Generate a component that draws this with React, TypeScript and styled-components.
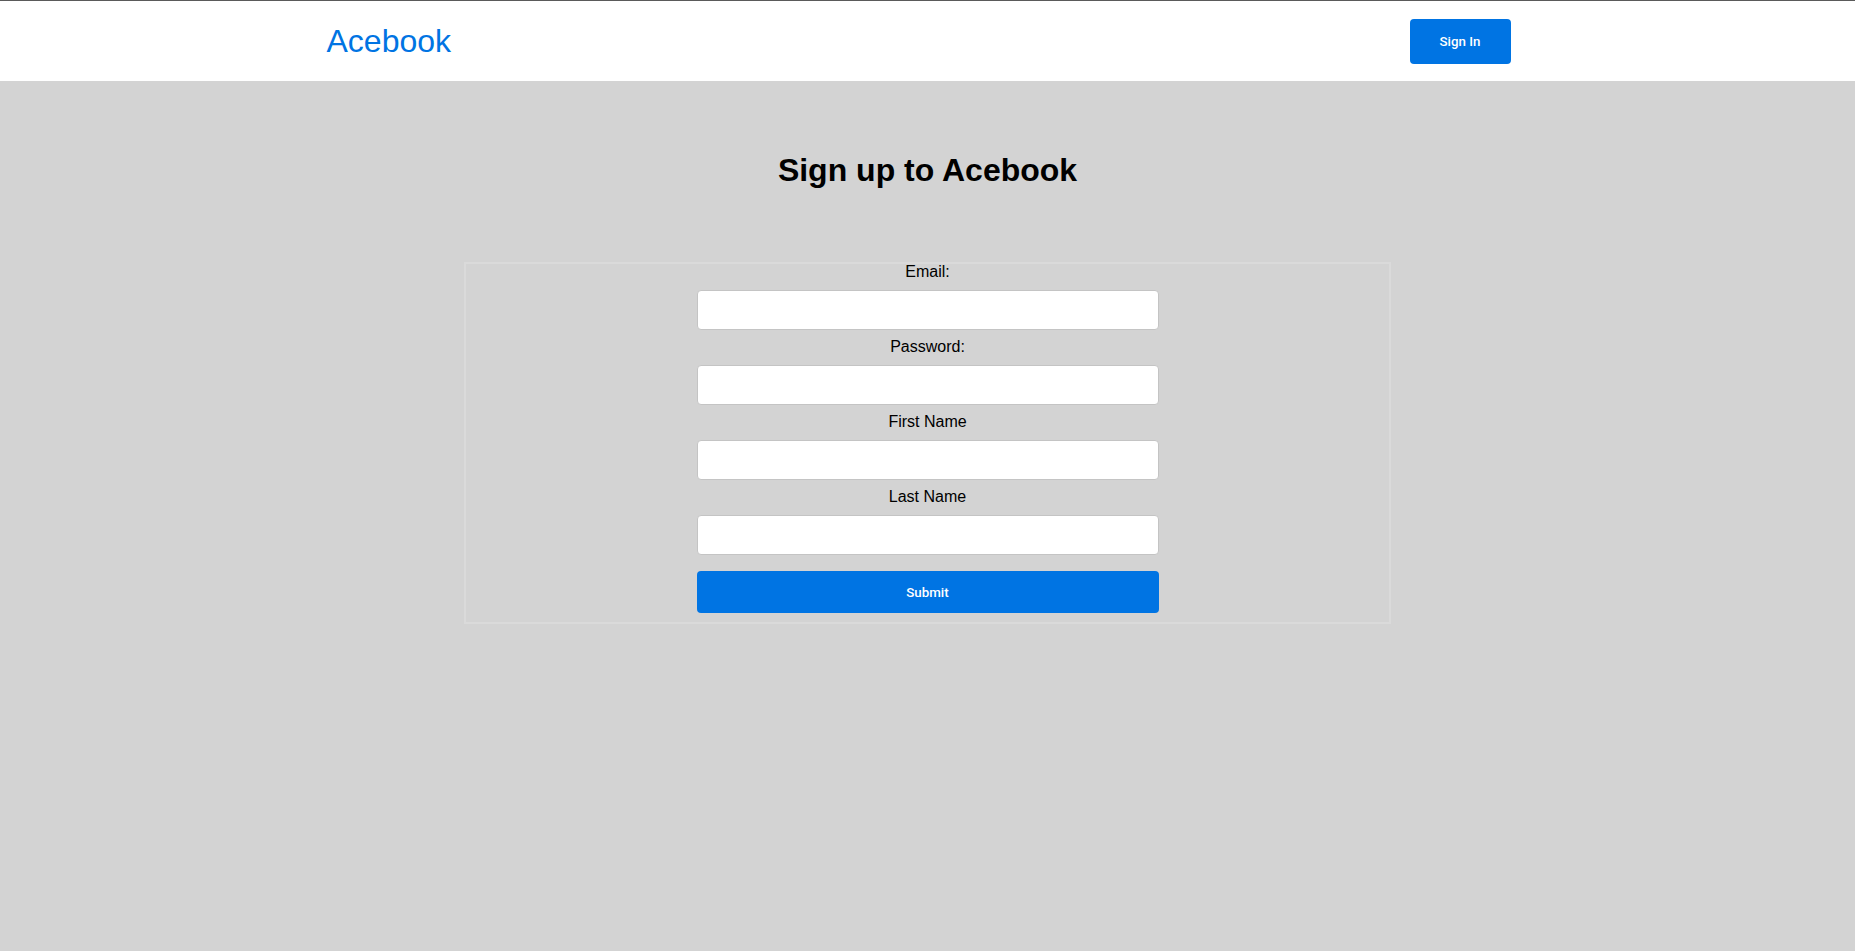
import React from "react";
import styled, { createGlobalStyle } from "styled-components";

const GlobalStyle = createGlobalStyle`
  html, body {
    margin: 0;
    padding: 0;
    background: #d3d3d3;
    font-family: "Liberation Sans", Arial, sans-serif;
  }
  * { box-sizing: border-box; }
`;

const Header = styled.header`
  background: #ffffff;
  border-top: 1px solid #5a5a5a;
  height: 81px;
`;

const HeaderInner = styled.div`
  width: 1202px;
  height: 100%;
  margin: 0 auto;
  display: flex;
  align-items: center;
  justify-content: space-between;
`;

const Logo = styled.a`
  font-family: "Liberation Sans", Arial, sans-serif;
  font-size: 32px;
  color: #0074e3;
  text-decoration: none;
`;

const SignInButton = styled.button`
  width: 101px;
  height: 45px;
  margin-right: 18px;
  border: none;
  border-radius: 4px;
  background: #0074e3;
  color: #ffffff;
  font-family: Roboto, "Liberation Sans", Arial, sans-serif;
  font-weight: 500;
  font-size: 13.33px;
  cursor: pointer;
`;

const Main = styled.main`
  background: #d3d3d3;
  min-height: calc(100vh - 81px);
  padding-top: 71px;
`;

const Title = styled.h1`
  margin: 0 0 73px;
  text-align: center;
  font-family: "Liberation Sans", Arial, sans-serif;
  font-size: 32px;
  font-weight: bold;
  color: #000000;
`;

const FormBox = styled.form`
  width: 50%;
  margin: 0 auto;
  border: 2px solid #dadada;
  padding: 0 0 9px;
  display: flex;
  flex-direction: column;
  align-items: center;
`;

const Label = styled.label`
  font-size: 16px;
  line-height: 15px;
  color: #000000;
  margin-bottom: 11px;
`;

const Input = styled.input`
  width: 462px;
  height: 40px;
  margin: 0 0 9px;
  background: #ffffff;
  border: 1px solid #c4c4c4;
  border-radius: 4px;
  padding: 0 10px;
  font-size: 16px;
  outline: none;
`;

const SubmitButton = styled.button`
  width: 462px;
  height: 42px;
  margin-top: 7px;
  border: none;
  border-radius: 4px;
  background: #0074e3;
  color: #ffffff;
  font-family: Roboto, "Liberation Sans", Arial, sans-serif;
  font-weight: 500;
  font-size: 13.33px;
  cursor: pointer;
`;

const fields = [
  { id: "email", label: "Email:", type: "email" },
  { id: "password", label: "Password:", type: "password" },
  { id: "firstName", label: "First Name", type: "text" },
  { id: "lastName", label: "Last Name", type: "text" },
];

export default function App() {
  return (
    <>
      <GlobalStyle />
      <Header>
        <HeaderInner>
          <Logo href="#">Acebook</Logo>
          <SignInButton type="button">Sign In</SignInButton>
        </HeaderInner>
      </Header>
      <Main>
        <Title>Sign up to Acebook</Title>
        <FormBox onSubmit={(e) => e.preventDefault()}>
          {fields.map((f) => (
            <React.Fragment key={f.id}>
              <Label htmlFor={f.id}>{f.label}</Label>
              <Input id={f.id} type={f.type} />
            </React.Fragment>
          ))}
          <SubmitButton type="submit">Submit</SubmitButton>
        </FormBox>
      </Main>
    </>
  );
}
